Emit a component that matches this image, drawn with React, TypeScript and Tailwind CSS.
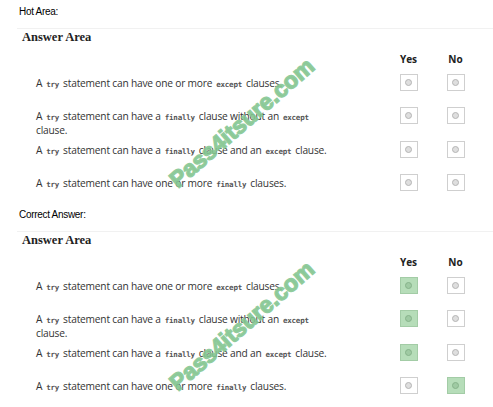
import React from "react";

const C = ({ children }: { children: React.ReactNode }) => (
  <code className="font-['DejaVu_Sans_Mono',monospace] text-[7.5px] font-bold text-[#555] mx-[1.5px]">{children}</code>
);

const rows: React.ReactNode[] = [
  <>A <C>try</C> statement can have one or more <C>except</C> clauses.</>,
  <>A <C>try</C> statement can have a <C>finally</C> clause without an <C>except</C><br />clause.</>,
  <>A <C>try</C> statement can have a <C>finally</C> clause and an <C>except</C> clause.</>,
  <>A <C>try</C> statement can have one or more <C>finally</C> clauses.</>,
];

const Box = ({ on }: { on: boolean }) => (
  <div
    className={
      "w-[18px] h-[17px] flex items-center justify-center border " +
      (on ? "bg-[#b6ddb9] border-[#a3cca6]" : "bg-white border-[#cfcfcf]")
    }
  >
    <div
      className={
        "w-[7px] h-[7px] rounded-full border " +
        (on ? "bg-[#9fcaa3] border-[#86b38a]" : "bg-[#dedede] border-[#b5b5b5]")
      }
    />
  </div>
);

const Section = ({ label, answers }: { label: string; answers?: ("yes" | "no")[] }) => (
  <div className="relative h-[203px]">
    <div className="h-[28px] pl-[19px] pt-[6px] text-[10px] leading-[12px] text-black font-['Liberation_Sans',Arial,sans-serif] tracking-[-0.3px]">
      {label}
    </div>
    <div className="ml-[17px] border-t border-[#f1f1f1]">
      <div className="pl-[5px] pt-[1px] h-[14px] font-['Liberation_Serif',serif] font-bold text-[12.5px] leading-[14px] text-[#222]">
        Answer Area
      </div>
      <div className="grid grid-cols-[1fr_47px_47px] pr-[14px] font-['Open_Sans',sans-serif] text-[#333]">
        <div className="mt-[9px] h-[14px]" />
        <div className="mt-[9px] h-[14px] text-center text-[10px] leading-[14px] font-bold text-[#222]">Yes</div>
        <div className="mt-[9px] h-[14px] text-center text-[10px] leading-[14px] font-bold text-[#222]">No</div>
        {rows.map((r, i) => {
          const h = i % 2 === 0 ? "h-[33px]" : "h-[34px]";
          const a = answers ? answers[i] : undefined;
          return (
            <React.Fragment key={i}>
              <div className={h + " pl-[19px] pt-[11px] text-[10.2px] leading-[13px] tracking-[-0.2px]"}>{r}</div>
              <div className={h + " flex justify-center pt-[8px]"}>
                <Box on={a === "yes"} />
              </div>
              <div className={h + " flex justify-center pt-[8px]"}>
                <Box on={a === "no"} />
              </div>
            </React.Fragment>
          );
        })}
      </div>
    </div>
    <div className="absolute left-[242px] top-[123px] -translate-x-1/2 -translate-y-1/2 rotate-[-41deg] pointer-events-none whitespace-nowrap font-['Liberation_Sans',Arial,sans-serif] font-bold text-[23px] leading-none text-[#7fc48d] opacity-90 [-webkit-text-stroke:1.4px_#86c793]">
      Pass4itsure.com
    </div>
  </div>
);

export default function App() {
  return (
    <div className="w-[493px] h-[407px] bg-white overflow-hidden">
      <Section label="Hot Area:" />
      <Section label="Correct Answer:" answers={["yes", "yes", "yes", "no"]} />
    </div>
  );
}
